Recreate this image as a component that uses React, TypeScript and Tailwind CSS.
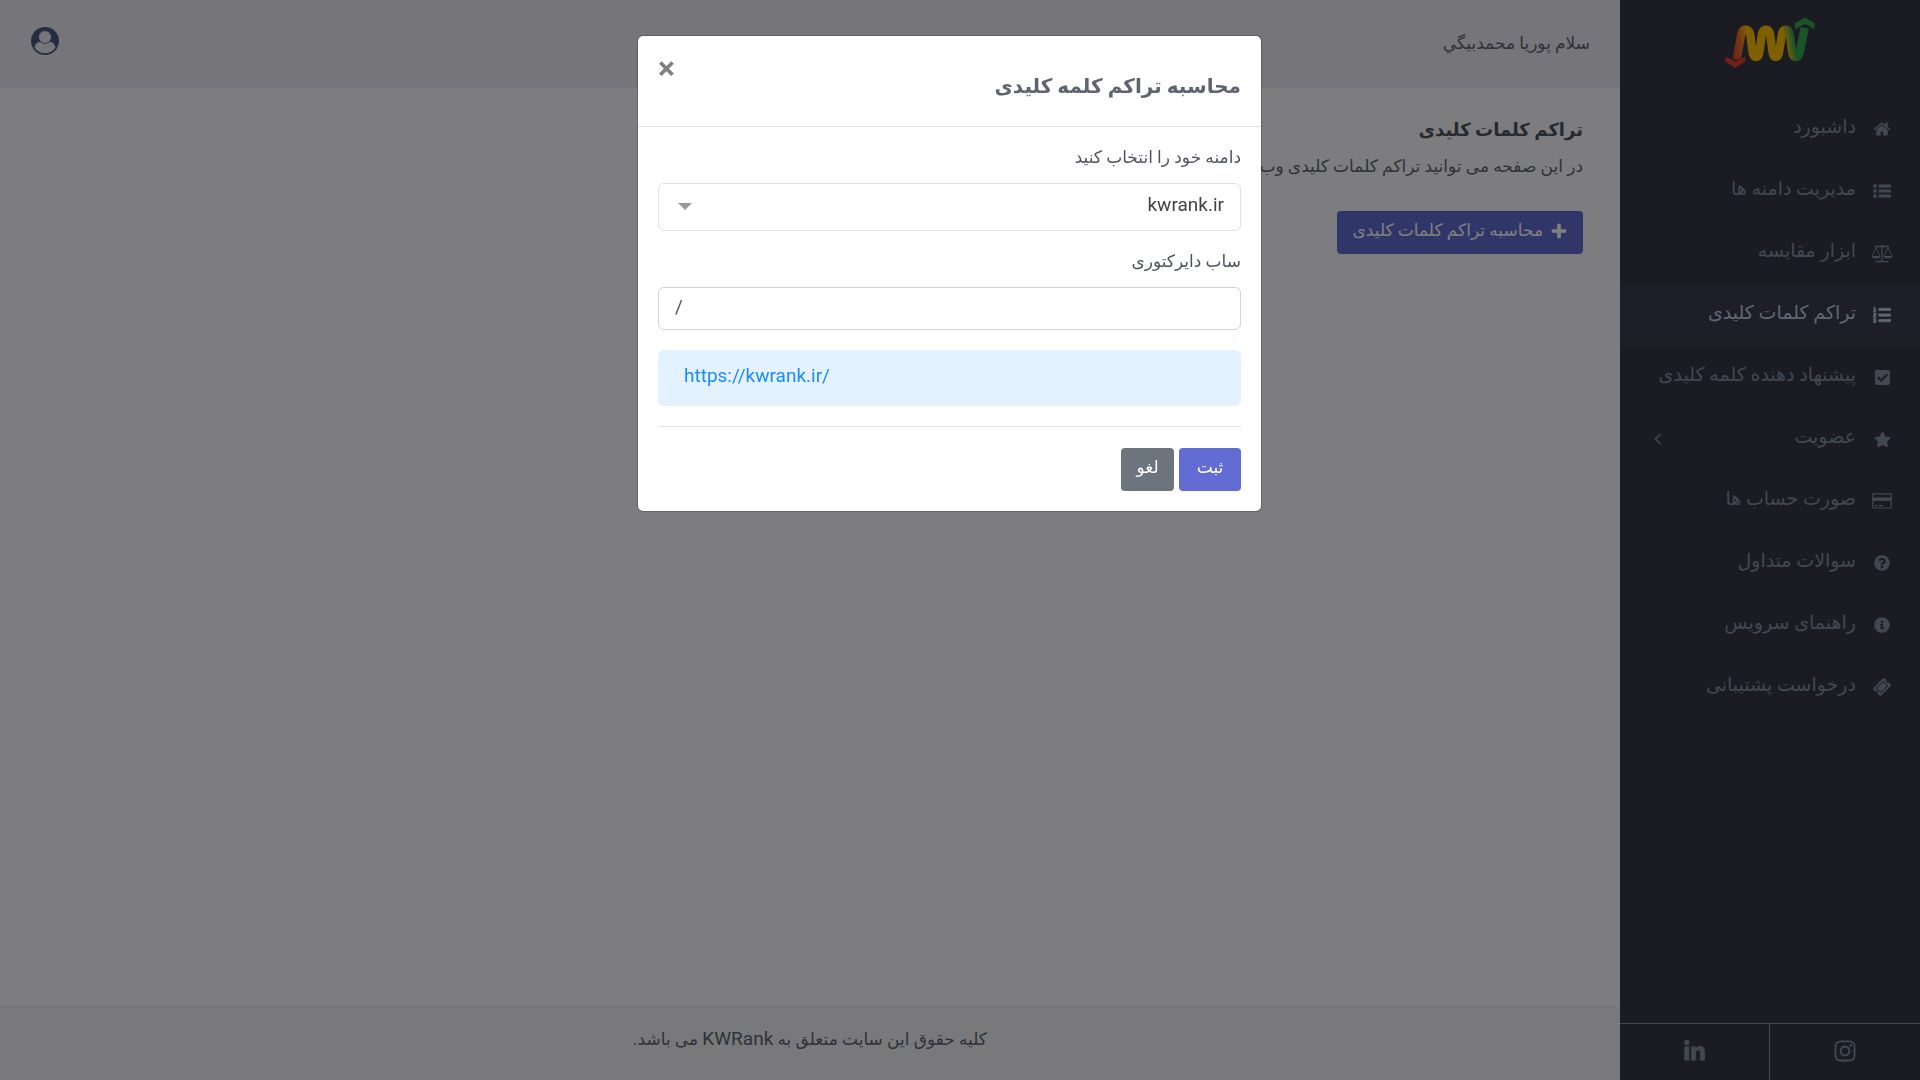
import { useState } from "react";
import type { ReactNode } from "react";
import {
  FaCheckSquare,
  FaInfoCircle,
  FaInstagram,
  FaLinkedinIn,
  FaListOl,
  FaPlus,
  FaQuestionCircle,
  FaStar,
  FaTicketAlt,
} from "react-icons/fa";

function Logo() {
  return (
    <svg viewBox="45 36 270 153" className="w-[90px] h-[51px]" aria-label="KWRank">
      <defs>
        <linearGradient id="wave" gradientUnits="userSpaceOnUse" x1="70" y1="160" x2="290" y2="120">
          <stop offset="0" stopColor="#e0402a" />
          <stop offset="0.14" stopColor="#e8742a" />
          <stop offset="0.24" stopColor="#ffc000" />
          <stop offset="0.72" stopColor="#ffc000" />
          <stop offset="0.84" stopColor="#34a853" />
          <stop offset="1" stopColor="#34a853" />
        </linearGradient>
      </defs>
      <path
        d="M80 164 L93 92 Q96 74 107 74 Q118 74 121 90 L127 138 Q129 156 138 156 Q147 156 149 138 L155 92 Q157 74 168 74 Q179 74 181 92 L187 138 Q189 156 197 156 Q206 156 208 138 L215 92 Q217 74 228 74 Q238 74 240 92 L246 138 Q248 156 257 156 Q267 156 270 138 L284 68"
        fill="none"
        stroke="url(#wave)"
        strokeWidth="25"
      />
      <path d="M45 153 76 169 107 153V170L76 189 45 172z" fill="#e0402a" stroke="#363648" strokeWidth="2" />
      <path d="M254 54 285 37 315 54V74L285 58 254 74z" fill="#34a853" stroke="#363648" strokeWidth="2" />
    </svg>
  );
}

function HomeIcon() {
  return (
    <svg viewBox="0 0 1792 1792" fill="currentColor" className="size-[18px]">
      <path d="M1472 992v480q0 26-19 45t-45 19h-384v-384h-256v384h-384q-26 0-45-19t-19-45v-480q0-1 .5-3t.5-3l575-474 575 474q1 2 1 6zm223-69l-62 74q-8 9-21 11h-3q-13 0-21-7l-692-577-692 577q-12 8-24 7-13-2-21-11l-62-74q-8-10-7-23.500t11-21.500l719-599q32-26 76-26t76 26l244 204v-195q0-14 9-23t23-9h192q14 0 23 9t9 23v408l219 182q10 8 11 21.500t-7 23.500z" />
    </svg>
  );
}

function ListIcon() {
  return (
    <svg viewBox="0 0 18 18" fill="currentColor" className="size-[18px]">
      <circle cx="2" cy="4" r="1.900" />
      <circle cx="2" cy="9" r="1.900" />
      <circle cx="2" cy="14" r="1.900" />
      <rect x="5.500" y="2.600" width="12.500" height="3" rx=".3" />
      <rect x="5.500" y="7.600" width="12.500" height="3" rx=".3" />
      <rect x="5.500" y="12.600" width="12.500" height="3" rx=".3" />
    </svg>
  );
}

function ScaleIcon() {
  return (
    <svg viewBox="0 0 22 19" fill="none" stroke="currentColor" className="w-[22px] h-[19px]">
      <path d="M4 2.500H18M11 2V17.500M4.500 17.700H17.500" strokeWidth="1.300" />
      <circle cx="11" cy="2.300" r="1.300" fill="currentColor" stroke="none" />
      <path d="M5 3.500 1.200 12M5 3.500 8.800 12M17 3.500 13.200 12M17 3.500 20.800 12" strokeWidth=".9" />
      <path d="M.5 12h9q-.6 2.500-4.500 2.500T.5 12zM12.500 12h9q-.6 2.500-4.500 2.500T12.500 12z" fill="currentColor" stroke="none" />
    </svg>
  );
}

function CardIcon() {
  return (
    <svg viewBox="0 0 20 16" fill="none" stroke="currentColor" className="w-[20px] h-[16px]">
      <rect x=".8" y=".8" width="18.400" height="14.200" rx=".8" strokeWidth="1.200" />
      <path d="M1 6.200H19" strokeWidth="3.400" />
      <path d="M3 12.600H5.500M7 12.600H11" strokeWidth="1.300" />
    </svg>
  );
}

function UserIcon() {
  return (
    <svg viewBox="0 0 28 28" className="size-7">
      <defs>
        <clipPath id="user-disc">
          <circle cx="14" cy="14" r="12.200" />
        </clipPath>
      </defs>
      <circle cx="14" cy="14" r="14" fill="#4d5a80" />
      <path
        clipPath="url(#user-disc)"
        d="M3 28V21C4.500 17 6.500 14.800 9 14.800C10.300 16 12 16.700 14 16.700S17.700 16 19 14.800C21.500 14.800 23.500 17 25 21V28z"
        fill="#ebeaf5"
      />
      <circle cx="14" cy="10" r="6.100" fill="#ebeaf5" />
    </svg>
  );
}

type NavItem = { label: string; icon: ReactNode; active?: boolean; nested?: boolean };

const NAV: NavItem[] = [
  { label: "داشبورد", icon: <HomeIcon /> },
  { label: "مدیریت دامنه ها", icon: <ListIcon /> },
  { label: "ابزار مقایسه", icon: <ScaleIcon /> },
  { label: "تراکم کلمات کلیدی", icon: <FaListOl size={18} strokeWidth={20} />, active: true },
  { label: "پیشنهاد دهنده کلمه کلیدی", icon: <FaCheckSquare size={17} /> },
  { label: "عضویت", icon: <FaStar size={17} />, nested: true },
  { label: "صورت حساب ها", icon: <CardIcon /> },
  { label: "سوالات متداول", icon: <FaQuestionCircle size={16} /> },
  { label: "راهنمای سرویس", icon: <FaInfoCircle size={16} /> },
  { label: "درخواست پشتیبانی", icon: <FaTicketAlt size={16} className="-rotate-45" /> },
];

function Sidebar() {
  return (
    <aside className="w-[300px] shrink-0 flex flex-col bg-[#363648] text-[#8391a2]">
      <a href="#" className="flex justify-center pt-[17px] h-[99px]">
        <Logo />
      </a>
      <nav className="flex-1">
        <ul>
          {NAV.map(item => (
            <li key={item.label}>
              <a
                href="#"
                className={`flex items-center h-[62px] pr-[27px] pl-[34px] gap-[15px] text-[19px] ${
                  item.active ? "bg-[#3b3c4e] text-[#bccee4]" : ""
                }`}
              >
                <span className="w-[22px] pb-0.5 flex justify-center">{item.icon}</span>
                <span className="flex-1 whitespace-nowrap pb-1.5">{item.label}</span>
                {item.nested && (
                  <svg viewBox="0 0 8 14" fill="none" stroke="currentColor" strokeWidth="1.500" className="w-2 h-3.5">
                    <path d="M6.500 1 1.500 6l5 5" />
                  </svg>
                )}
              </a>
            </li>
          ))}
        </ul>
      </nav>
      <div className="grid grid-cols-2 h-[57px] border-t border-[#8391a2]">
        <a href="#" aria-label="Instagram" className="flex items-center justify-center pb-0.5">
          <FaInstagram size={24} />
        </a>
        <a href="#" aria-label="LinkedIn" className="flex items-center justify-center pb-0.5 border-r border-[#8391a2]">
          <FaLinkedinIn size={23} strokeWidth={16} />
        </a>
      </div>
    </aside>
  );
}

function DensityModal() {
  const [domain, setDomain] = useState("kwrank.ir");
  const [path, setPath] = useState("/");

  return (
    <div className="fixed inset-0 flex justify-center items-start pt-[35px] pr-[21px] bg-black/50 z-20">
      <div
        role="dialog"
        aria-labelledby="modal-title"
        className="w-[625px] bg-white border border-black/20 bg-clip-padding rounded-md text-[#6c757d]"
      >
        <div className="flex items-start justify-between h-[91px] px-5 pt-5 border-b border-[#dee2e6]">
          <h4 id="modal-title" className="text-[20px] leading-[60px] font-bold text-[#5f6570]">
            محاسبه تراکم کلمه کلیدی
          </h4>
          <button type="button" aria-label="بستن" className="text-[32px] leading-6 font-bold text-[#808080]">
            ×
          </button>
        </div>
        <form className="px-5 pt-[18px] pb-5" onSubmit={e => e.preventDefault()}>
          <label htmlFor="domain" className="block text-[17px] leading-6 mb-3.5 text-[#4f545c]">
            دامنه خود را انتخاب کنید
          </label>
          <div className="relative">
            <select
              id="domain"
              value={domain}
              onChange={e => setDomain(e.target.value)}
              className="appearance-none w-full h-12 px-4 pb-1 bg-white border border-[#dee2e6] rounded-md text-[19px] text-[#444444]"
            >
              <option value="kwrank.ir">kwrank.ir</option>
            </select>
            <svg viewBox="0 0 14 7" className="absolute left-5 top-5 w-3.5 h-[7px] pointer-events-none">
              <path d="M0 0H14L7 7z" fill="#999999" />
            </svg>
          </div>
          <label htmlFor="subdir" className="block text-[17px] leading-6 mt-[18px] mb-3.5 text-[#4f545c]">
            ساب دایرکتوری
          </label>
          <input
            id="subdir"
            dir="ltr"
            value={path}
            onChange={e => setPath(e.target.value)}
            className="block w-full h-[43px] px-4 pb-1 border border-[#ced4da] rounded-md text-[19px] text-[#4f545c]"
          />
          <div dir="ltr" className="mt-5 h-14 px-[26px] rounded-md bg-[#e3f2fe] text-[19px] leading-[52px] text-[#1a8cff]">
            {`https://${domain}${path}`}
          </div>
          <hr className="mt-5 mb-[21px] border-[#dee2e6]" />
          <div className="flex gap-[5px] text-white text-[17px]">
            <button type="submit" className="h-[43px] px-4 pb-1 min-w-[62px] rounded-[4px] bg-[#636cd3]">
              ثبت
            </button>
            <button type="button" className="h-[43px] px-[15px] pb-1 min-w-[53px] rounded-[4px] bg-[#6c757d]">
              لغو
            </button>
          </div>
        </form>
      </div>
    </div>
  );
}

export default function App() {
  return (
    <div dir="rtl" className="min-h-screen flex bg-[#fafbfe] font-[Roboto,'DejaVu_Sans',sans-serif] text-[#6c757d]">
      <Sidebar />
      <div className="flex-1 min-w-0 flex flex-col">
        <header className="h-[88px] pr-[30px] pl-[31px] flex items-center justify-between bg-[#ebeaf5]">
          <span className="text-[17px] text-[#5f6570]">سلام پوریا محمدبیگي</span>
          <button type="button" aria-label="حساب کاربری" className="pb-1.5">
            <UserIcon />
          </button>
        </header>
        <main className="flex-1 px-[37px] pt-6">
          <h1 className="text-[18px] leading-9 font-bold text-[#4f545c]">تراکم کلمات کلیدی</h1>
          <p className="text-[17px] leading-9 text-[#5f6570]">در این صفحه می توانید تراکم کلمات کلیدی وب سایت</p>
          <button
            type="button"
            className="mt-[27px] h-[43px] px-4 pb-1 flex items-center gap-2 rounded-[4px] bg-[#636cd3] text-[17px] text-white"
          >
            <FaPlus size={16} strokeWidth={24} />
            محاسبه تراکم کلمات کلیدی
          </button>
        </main>
        <footer className="h-[75px] flex items-center justify-center pb-1.5 bg-[#f3f3f6] text-[17px] text-[#5f6570]">
          <p>
            کلیه حقوق این سایت متعلق به <span className="text-[19px]">KWRank</span> می باشد.
          </p>
        </footer>
      </div>
      <DensityModal />
    </div>
  );
}
